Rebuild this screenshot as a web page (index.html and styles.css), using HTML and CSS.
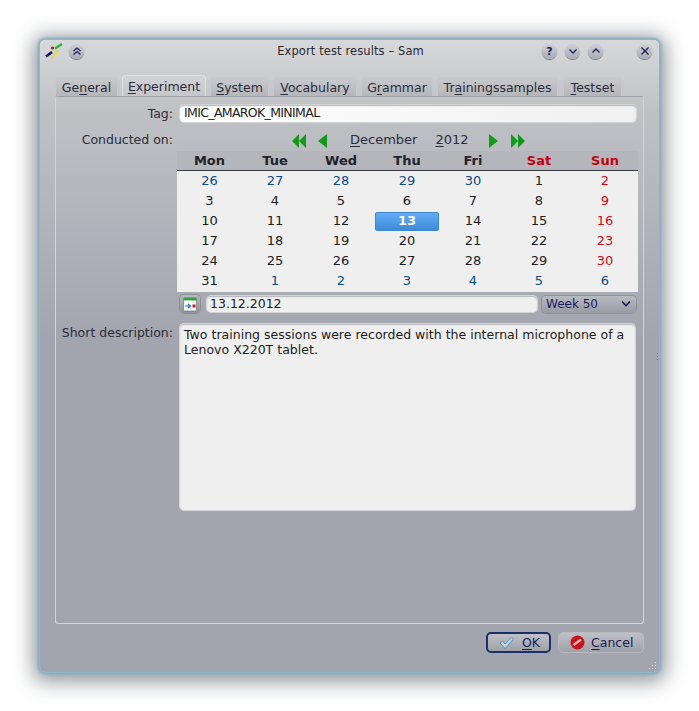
FILE: index.html
```html
<!DOCTYPE html>
<html>
  <head>
    <meta charset="utf-8" />
    <title>Export test results – Sam</title>
    <link rel="stylesheet" href="styles.css">
  </head>
  <body>
    <div class="window">
      <!-- Title bar -->
      <div class="titlebar">
        <svg class="appicon" width="18" height="18" viewBox="0 0 18 18">
          <path d="M1 14.5 L7 10" stroke="#16166e" stroke-width="2.6" />
          <path d="M10 6.5 L17 2" stroke="#2eb82e" stroke-width="2.6" />
          <path d="M7.5 15 L13 8.5" stroke="#e6dc3c" stroke-width="2.6" />
          <circle cx="7.5" cy="6" r="1.6" fill="#a81c1c" />
          <circle cx="6.5" cy="16" r="1" fill="#c8c8c8" />
        </svg>
        <span class="wbtn wbtn-shade">
          <svg width="10" height="10" viewBox="0 0 10 10"><path d="M1.5 5 L5 2 L8.5 5 M1.5 8.5 L5 5.5 L8.5 8.5" /></svg>
        </span>
        <div class="title">Export test results – Sam</div>
        <span class="wbtn wbtn-help">?</span>
        <span class="wbtn">
          <svg width="10" height="10" viewBox="0 0 10 10"><path d="M1.5 3.5 L5 7 L8.5 3.5" /></svg>
        </span>
        <span class="wbtn">
          <svg width="10" height="10" viewBox="0 0 10 10"><path d="M1.5 6.5 L5 3 L8.5 6.5" /></svg>
        </span>
        <span class="wbtn wbtn-close">
          <svg width="10" height="10" viewBox="0 0 10 10"><path d="M1.5 1.5 L8.5 8.5 M8.5 1.5 L1.5 8.5" /></svg>
        </span>
      </div>

      <!-- Tabs -->
      <div class="tabs">
        <div class="tab tab-general">Ge<u>n</u>eral</div>
        <div class="tab tab-active"><u>E</u>xperiment</div>
        <div class="tab tab-system"><u>S</u>ystem</div>
        <div class="tab tab-vocab"><u>V</u>ocabulary</div>
        <div class="tab tab-grammar">G<u>r</u>ammar</div>
        <div class="tab tab-train">Tr<u>a</u>iningssamples</div>
        <div class="tab tab-test"><u>T</u>estset</div>
      </div>

      <div class="panel">
        <div class="row row-tag">
          <label class="lbl">Tag:</label>
          <div class="input input-tag">IMIC_AMAROK_MINIMAL</div>
        </div>

        <div class="row row-date">
          <label class="lbl lbl-date">Conducted on:</label>
          <div class="datepicker">
            <div class="calnav">
              <svg class="nav nav-first" width="16" height="14" viewBox="0 0 16 14"><path d="M7 0 V14 L0 7 Z M14 0 V14 L7 7 Z" /></svg>
              <svg class="nav nav-prev" width="9" height="14" viewBox="0 0 9 14"><path d="M9 0 V14 L0 7 Z" /></svg>
              <span class="month"><u>D</u>ecember</span>
              <span class="year"><u>2</u>012</span>
              <svg class="nav nav-next" width="9" height="14" viewBox="0 0 9 14"><path d="M0 0 V14 L9 7 Z" /></svg>
              <svg class="nav nav-last" width="16" height="14" viewBox="0 0 16 14"><path d="M0 0 V14 L7 7 Z M7 0 V14 L14 7 Z" /></svg>
            </div>
            <div class="calhead">
              <span>Mon</span><span>Tue</span><span>Wed</span><span>Thu</span><span>Fri</span><span class="we">Sat</span><span class="we">Sun</span>
            </div>
            <div class="calgrid">
              <span class="o">26</span><span class="o">27</span><span class="o">28</span><span class="o">29</span><span class="o">30</span><span>1</span><span class="r">2</span>
              <span>3</span><span>4</span><span>5</span><span>6</span><span>7</span><span>8</span><span class="r">9</span>
              <span>10</span><span>11</span><span>12</span><span class="sel">13</span><span>14</span><span>15</span><span class="r">16</span>
              <span>17</span><span>18</span><span>19</span><span>20</span><span>21</span><span>22</span><span class="r">23</span>
              <span>24</span><span>25</span><span>26</span><span>27</span><span>28</span><span>29</span><span class="r">30</span>
              <span>31</span><span class="o">1</span><span class="o">2</span><span class="o">3</span><span class="o">4</span><span class="o">5</span><span class="o">6</span>
            </div>
            <div class="datefoot">
              <span class="calbtn">
                <svg width="16" height="16" viewBox="0 0 16 16">
                  <rect x="1.5" y="1.5" width="13" height="13.5" rx="1" fill="#f6f8f6" stroke="#6f7a70" stroke-width="0.7" />
                  <rect x="1.5" y="2" width="13" height="2.4" fill="#2f9e3f" />
                  <path d="M3 10 H8 M6 8 L8.5 10 L6 12" stroke="#2a6fc0" stroke-width="1.2" fill="none" />
                  <rect x="10.5" y="8.5" width="3" height="3" fill="#c02020" />
                </svg>
              </span>
              <div class="input input-date">13.12.2012</div>
              <div class="weekbox">
                <span>Week 50</span>
                <svg width="10" height="8" viewBox="0 0 10 8"><path d="M1 1.5 L5 5.5 L9 1.5" /></svg>
              </div>
            </div>
          </div>
        </div>

        <div class="row row-desc">
          <label class="lbl">Short description:</label>
          <div class="input textarea">Two training sessions were recorded with the internal microphone of a Lenovo X220T tablet.</div>
        </div>
      </div>

      <div class="buttons">
        <div class="btn btn-ok">
          <svg width="15" height="14" viewBox="0 0 15 14"><path d="M1 7 L3.5 5 L6 8 L12.5 1 L14.5 3 L6 12.5 Z" fill="#c3d6e6" stroke="#5f8cb0" stroke-width="1" /></svg>
          <span><u>O</u>K</span>
        </div>
        <div class="btn btn-cancel">
          <svg width="15" height="15" viewBox="0 0 15 15">
            <circle cx="7.5" cy="7.5" r="7" fill="#c4161c" />
            <path d="M3.5 10 L11 4.5" stroke="#f0b0b0" stroke-width="2.4" />
          </svg>
          <span><u>C</u>ancel</span>
        </div>
      </div>

      <!-- splitter dots and resize grip sit on top of the window frame -->
      <div class="dots"></div>
      <svg class="grip" width="8" height="8" viewBox="0 0 8 8">
        <rect x="6" y="0" width="1" height="1" /><rect x="6" y="3" width="1" height="1" /><rect x="3" y="3" width="1" height="1" />
        <rect x="6" y="6" width="1" height="1" /><rect x="3" y="6" width="1" height="1" /><rect x="0" y="6" width="1" height="1" />
      </svg>
    </div>
  </body>
</html>
```

FILE: styles.css
```css
html, body {
  margin: 0;
  background: #fff;
}

body {
  width: 699px;
  height: 711px;
  padding: 40px 0 0 40px;
  box-sizing: border-box;
  overflow: hidden;
  font-family: "DejaVu Sans", sans-serif;
  font-size: 12px;
  color: #232330;
}

u {
  text-underline-offset: 2px;
}

.window {
  position: relative;
  box-sizing: border-box;
  width: 619px;
  height: 632px;
  padding: 0 15px;
  border-radius: 5px;
  background: linear-gradient(180deg, #d7d8da 0, #bfc1c5 70px, #a2a5ad 300px, #a2a5ad 100%);
  box-shadow:
    0 0 0 1px #8bb6cc,
    0 0 3px 2px #7fabc4,
    0 3px 20px 7px rgba(60, 70, 80, 0.55);
}

/* title bar */
.titlebar {
  display: flex;
  align-items: center;
  height: 22px;
  margin: 0 -15px;
  padding: 0 7px 0 5px;
}

.appicon {
  margin-right: 6px;
}

.title {
  flex: 1;
  text-align: center;
  font-size: 11.5px;
  letter-spacing: 0.1px;
  padding-left: 83px;
  color: #2a2a35;
}

.wbtn {
  display: flex;
  align-items: center;
  justify-content: center;
  width: 15px;
  height: 15px;
  margin-left: 8px;
  border-radius: 50%;
  background: linear-gradient(180deg, #cfd0d6, #a9abb5);
  box-shadow: 0 1px 1px #74767e;
  font-size: 11px;
  font-weight: bold;
  color: #1c1c60;
}

.wbtn svg {
  fill: none;
  stroke: #1c1c60;
  stroke-width: 1.3;
}

.wbtn-shade {
  margin-left: 0;
}

.wbtn-close {
  margin-left: 34px;
}

/* tabs */
.tabs {
  display: flex;
  align-items: flex-end;
  height: 34px;
}

.tab {
  box-sizing: border-box;
  height: 19px;
  padding-top: 2px;
  margin-right: 4px;
  text-align: center;
  font-size: 12.5px;
  line-height: 16px;
  color: #2c2c3a;
  border: 1px solid #c6c8cc;
  border-bottom: 0;
  border-radius: 4px 4px 0 0;
  background: linear-gradient(180deg, #c9cacd, #b4b6ba);
}

.tab-general { width: 63px; }
.tab-active {
  width: 84px;
  height: 21px;
  padding-top: 3px;
  background: linear-gradient(180deg, #d2d3d6, #c4c6ca);
  border-color: #e0e1e3;
}
.tab-system { width: 59px; }
.tab-vocab { width: 84px; }
.tab-grammar { width: 72px; }
.tab-train { width: 121px; margin-right: 5px; }
.tab-test { width: 59px; margin-right: 0; }

.panel {
  box-sizing: border-box;
  height: 528px;
  padding: 8px 0 0 0;
  border: 1px solid #d4d5d9;
  border-top-color: #a0a1a6;
  border-radius: 3px;
}

.row {
  display: flex;
}

.lbl {
  width: 117px;
  flex: none;
  text-align: right;
  font-size: 12.5px;
  line-height: 17px;
  color: #2c2c3a;
}

.input {
  box-sizing: border-box;
  border-radius: 4px;
  background: #efefef;
  font-size: 12.5px;
  color: #1b1b22;
  box-shadow: inset 0 1px 1px #b5b6ba, 0 0 0 1px #d4d5d8;
}

.row-tag .input-tag {
  width: 456px;
  height: 17px;
  margin-left: 7px;
  padding: 0 4px;
  line-height: 16px;
  letter-spacing: -0.65px;
  background: linear-gradient(90deg, #fff, #f0f0f0);
}

.row-date {
  margin-top: 8px;
}

.lbl-date {
  padding-top: 1px;
}

.datepicker {
  width: 461px;
  margin-left: 4px;
}

.calnav {
  display: flex;
  align-items: center;
  height: 21px;
  padding-left: 115px;
  font-size: 13px;
  color: #2c2c3a;
}

.calnav span {
  margin-bottom: 2px;
}

.nav {
  fill: #109a18;
}

.nav-prev { margin-left: 10px; }
.month { margin-left: 23px; }
.year { margin-left: 18px; }
.nav-next { margin-left: 20px; }
.nav-last { margin-left: 13px; }

.calhead {
  display: grid;
  grid-template-columns: 65px repeat(6, 66px);
  height: 20px;
  background: #b4b6bb;
  border-bottom: 1px solid #3c3d44;
  box-sizing: border-box;
  font-size: 13px;
  font-weight: bold;
  line-height: 19px;
  text-align: center;
  color: #22222c;
}

.calhead .we {
  color: #c40010;
}

.calgrid {
  display: grid;
  grid-template-columns: 65px repeat(6, 66px);
  grid-auto-rows: 20px;
  padding-bottom: 1px;
  background: #efefef;
  font-size: 13px;
  line-height: 19px;
  text-align: center;
  color: #1b1b22;
}

.calgrid .o { color: #0c4a86; }
.calgrid .r { color: #d40818; }

.calgrid .sel {
  box-sizing: border-box;
  height: 19px;
  margin: 1px 1px 0 1px;
  border: 1px solid #3f87cc;
  border-radius: 2px;
  background: linear-gradient(180deg, #62aef6, #3f8ad6);
  font-weight: bold;
  line-height: 16px;
  color: #fff;
}

.datefoot {
  display: flex;
  align-items: center;
  height: 22px;
  margin-top: 1px;
  padding: 0 0 0 3px;
}

.calbtn {
  display: flex;
  align-items: center;
  justify-content: center;
  box-sizing: border-box;
  width: 20px;
  height: 18px;
  border-radius: 4px;
  background: linear-gradient(180deg, #b9bac0, #909299);
  box-shadow: 0 0 0 1px #8c8e96;
}

.input-date {
  width: 330px;
  height: 16px;
  margin-left: 7px;
  padding: 0 3px;
  line-height: 15px;
}

.weekbox {
  display: flex;
  align-items: center;
  justify-content: space-between;
  box-sizing: border-box;
  width: 94px;
  height: 17px;
  margin-left: 5px;
  padding: 0 5px 0 4px;
  border-radius: 4px;
  background: linear-gradient(180deg, #b9bac2, #989aa4);
  box-shadow: 0 0 0 1px #8f919a;
  font-size: 12px;
  color: #18185a;
}

.weekbox svg {
  fill: none;
  stroke: #18185a;
  stroke-width: 1.6;
}

.row-desc {
  margin-top: 9px;
}

.textarea {
  width: 455px;
  height: 186px;
  margin-left: 7px;
  padding: 3px 4px;
  line-height: 15px;
  letter-spacing: 0.015px;
}

/* dialog buttons */
.buttons {
  display: flex;
  justify-content: flex-end;
  gap: 7px;
  margin-top: 8px;
}

.btn {
  display: flex;
  align-items: center;
  box-sizing: border-box;
  height: 21px;
  border-radius: 5px;
  background: linear-gradient(180deg, #c0c1c7, #9fa1a9);
  font-size: 12.5px;
  color: #1a1a55;
}

.btn-ok {
  width: 65px;
  padding-left: 11px;
  gap: 8px;
  border: 2px solid #1c2f6c;
}

.btn-cancel {
  width: 86px;
  padding-left: 11px;
  gap: 6px;
  border: 1px solid #b8bac0;
}

.dots {
  position: absolute;
  left: 617px;
  top: 313px;
  width: 1px;
  height: 7px;
  background: repeating-linear-gradient(180deg, #74767e 0 1px, transparent 1px 3px);
}

.grip {
  position: absolute;
  right: 2px;
  bottom: 2px;
  fill: #d4d5da;
}
```
